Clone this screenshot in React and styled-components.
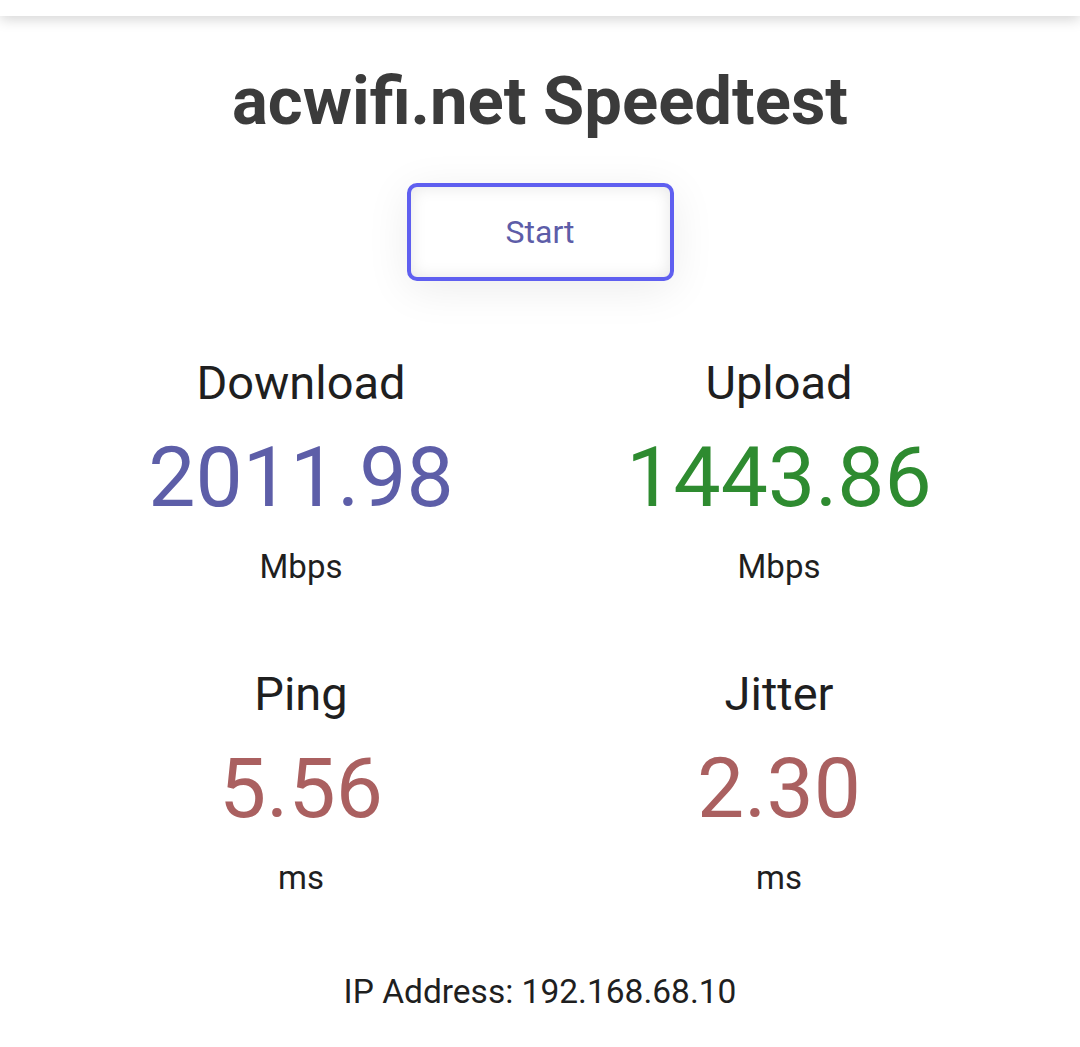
import React from "react";
import styled, { createGlobalStyle } from "styled-components";

const GlobalStyle = createGlobalStyle`
  body {
    margin: 0;
    background: #ffffff;
    font-family: Roboto, "Liberation Sans", sans-serif;
  }
`;

const Page = styled.div`
  width: 1080px;
  min-height: 1047px;
  display: flex;
  flex-direction: column;
  align-items: center;
  overflow: hidden;
`;

const TopBar = styled.div`
  align-self: stretch;
  height: 16px;
  background: #ffffff;
  box-shadow: 0 3px 14px rgba(0, 0, 0, 0.18);
  position: relative;
  z-index: 1;
`;

const Title = styled.h1`
  margin: 45px 0 0;
  font-size: 67px;
  line-height: 80px;
  font-weight: 700;
  color: #3b3b3b;
`;

const StartButton = styled.button`
  margin-top: 42px;
  width: 267px;
  height: 98px;
  box-sizing: border-box;
  border: 4px solid #5f5ff0;
  border-radius: 10px;
  background: #ffffff;
  box-shadow: inset 0 0 16px rgba(0, 0, 0, 0.1), 0 8px 44px rgba(0, 0, 0, 0.08);
  font-family: Roboto, "Liberation Sans", sans-serif;
  font-size: 32px;
  color: #5d5da8;
  cursor: pointer;
`;

const Grid = styled.div`
  margin-top: 74px;
  width: 956px;
  display: grid;
  grid-template-columns: 1fr 1fr;
  row-gap: 79px;
`;

const Metric = styled.div`
  display: flex;
  flex-direction: column;
  align-items: center;
`;

const Label = styled.div`
  font-size: 47px;
  line-height: 56px;
  color: #1f1f1f;
`;

const Value = styled.div`
  margin-top: 17px;
  font-size: 84px;
  line-height: 100px;
  color: ${(p) => p.$color};
`;

const Unit = styled.div`
  margin-top: 19px;
  font-size: 33px;
  line-height: 40px;
  color: #1f1f1f;
`;

const IpLine = styled.div`
  margin-top: 74px;
  font-size: 33.5px;
  line-height: 40px;
  color: #1f1f1f;
`;

const metrics = [
  { label: "Download", value: "2011.98", unit: "Mbps", color: "#5d5ea8" },
  { label: "Upload", value: "1443.86", unit: "Mbps", color: "#2e8b30" },
  { label: "Ping", value: "5.56", unit: "ms", color: "#aa6060" },
  { label: "Jitter", value: "2.30", unit: "ms", color: "#aa6060" },
];

export default function App() {
  return (
    <>
      <GlobalStyle />
      <Page>
        <TopBar />
        <Title>acwifi.net Speedtest</Title>
        <StartButton>Start</StartButton>
        <Grid>
          {metrics.map((m) => (
            <Metric key={m.label}>
              <Label>{m.label}</Label>
              <Value $color={m.color}>{m.value}</Value>
              <Unit>{m.unit}</Unit>
            </Metric>
          ))}
        </Grid>
        <IpLine>IP Address: 192.168.68.10</IpLine>
      </Page>
    </>
  );
}
